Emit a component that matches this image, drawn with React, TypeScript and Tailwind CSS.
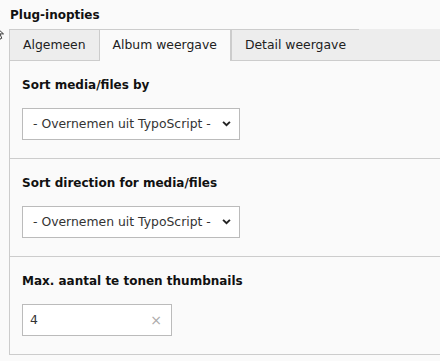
import { useState } from "react";

const tabs = ["Algemeen", "Album weergave", "Detail weergave"];

function SelectField(props: { value: string }) {
  return (
    <div className="relative w-[218px] h-[32px] bg-white border border-[#bbbbbb] flex items-center pl-[10px] pr-[8px]">
      <span className="flex-1 text-[#333333] text-[12.4px]">{props.value}</span>
      <svg viewBox="0 0 10 7" className="w-[9px] h-[6px] text-[#222222]" fill="none" stroke="currentColor" strokeWidth="2.2">
        <path d="M1 1l4 4 4-4" />
      </svg>
    </div>
  );
}

function Section(props: { label: string; children: React.ReactNode }) {
  return (
    <div className="border-b border-[#cccccc] pl-[12px] pt-[15px] pb-[18px]">
      <p className="font-bold leading-[18px] mb-[14px] text-[#111111]">{props.label}</p>
      {props.children}
    </div>
  );
}

export default function App() {
  const [active, setActive] = useState(1);

  return (
    <div
      className="relative w-[440px] h-[361px] overflow-hidden bg-[#fafafa] text-[12px] text-[#212121]"
      style={{ fontFamily: '"DejaVu Sans", Verdana, sans-serif' }}
    >
      <svg viewBox="0 0 12 16" className="absolute left-[-6px] top-[26px] w-[12px] h-[14px]">
        <path d="M1 1v12l3-3 2 5 2-1-2-5h4z" fill="#ffffff" stroke="#222222" strokeWidth="1" />
      </svg>
      <p className="pl-[10px] pt-[6px] font-bold leading-[18px] text-[#111111]">Plug-inopties</p>
      <div className="ml-[9px] mt-[5px] flex items-start h-[32px] bg-[#ededed] border-b border-[#cccccc]">
        {tabs.map((tab, i) => (
          <button
            key={tab}
            onClick={() => setActive(i)}
            className={
              i === active
                ? "h-[32px] mb-[-1px] px-[13px] bg-[#fafafa] border border-b-0 border-[#cccccc] text-[#212121] text-[12.4px]"
                : "h-[31px] px-[13px] border-t border-l border-[#cccccc] text-[#212121] text-[12.4px]"
            }
          >
            {tab}
          </button>
        ))}
      </div>
      <div className="ml-[9px] border-l border-[#cccccc]">
        <Section label="Sort media/files by">
          <SelectField value="- Overnemen uit TypoScript -" />
        </Section>
        <Section label="Sort direction for media/files">
          <SelectField value="- Overnemen uit TypoScript -" />
        </Section>
        <Section label="Max. aantal te tonen thumbnails">
          <div className="w-[150px] h-[32px] bg-white border border-[#bbbbbb] flex items-center pl-[7px] pr-[9px]">
            <span className="flex-1 text-[#333333] text-[12.4px]">4</span>
            <span className="text-[#aaaaaa] text-[14px] leading-none">×</span>
          </div>
        </Section>
      </div>
    </div>
  );
}
